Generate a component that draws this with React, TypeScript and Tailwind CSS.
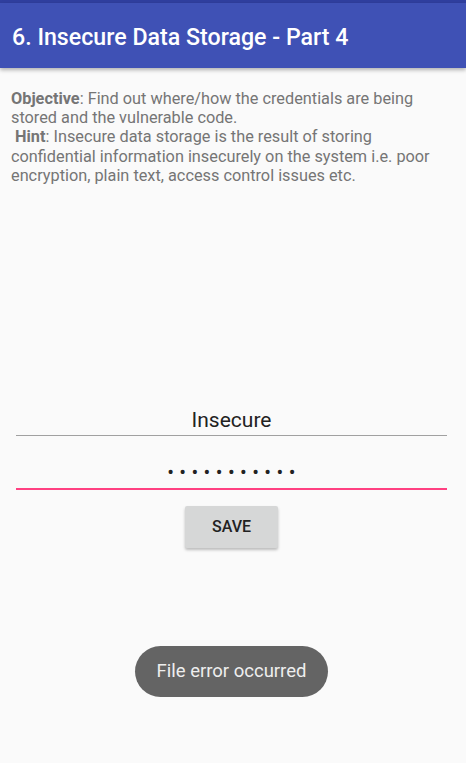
export default function App() {
  return (
    <div
      className="flex h-[763px] w-[466px] flex-col bg-[#fafafa]"
      style={{ fontFamily: "Roboto, 'Liberation Sans', sans-serif" }}
    >
      <div className="h-[3px] bg-[#303f9f]" />
      <div className="flex h-[65px] items-center bg-[#3f51b5] pl-[12px] pt-[3px] shadow-[0_2px_4px_rgba(0,0,0,0.3)]">
        <h1 className="text-[23.2px] font-medium text-white">6. Insecure Data Storage - Part 4</h1>
      </div>

      <p className="pl-[11px] pr-[20px] pt-[21px] text-[16.3px] leading-[19.2px] text-[#757575]">
        <b>Objective</b>: Find out where/how the credentials are being stored and the vulnerable code.
        <br />
        &nbsp;<b>Hint</b>: Insecure data storage is the result of storing confidential information insecurely
        on the system i.e. poor encryption, plain text, access control issues etc.
      </p>

      <div className="ml-[16px] mr-[19px] flex flex-col">
        <div className="mt-[215px] flex h-[36px] items-end justify-center border-b border-[#a0a0a0] pb-[3px]">
          <span className="text-[21px] leading-[24px] text-[#222]">Insecure</span>
        </div>

        <div className="mt-[16px] flex h-[38px] items-end justify-center border-b-2 border-[#ff4081] pb-[6px]">
          <span className="pl-[5px] text-[20px] leading-[20px] tracking-[5.4px] text-[#222]">•••••••••••</span>
        </div>

        <div className="mt-[16px] flex justify-center">
          <button className="h-[42px] w-[93px] rounded-[2px] bg-[#d6d7d7] text-[16px] font-medium text-[#222] shadow-[0_2px_3px_rgba(0,0,0,0.25)]">
            SAVE
          </button>
        </div>

        <div className="mt-[98px] flex justify-center">
          <div className="flex h-[51px] w-[193px] items-center justify-center rounded-full bg-[#646464] text-[18.5px] text-[#eeeeee]">
            File error occurred
          </div>
        </div>
      </div>
    </div>
  );
}
